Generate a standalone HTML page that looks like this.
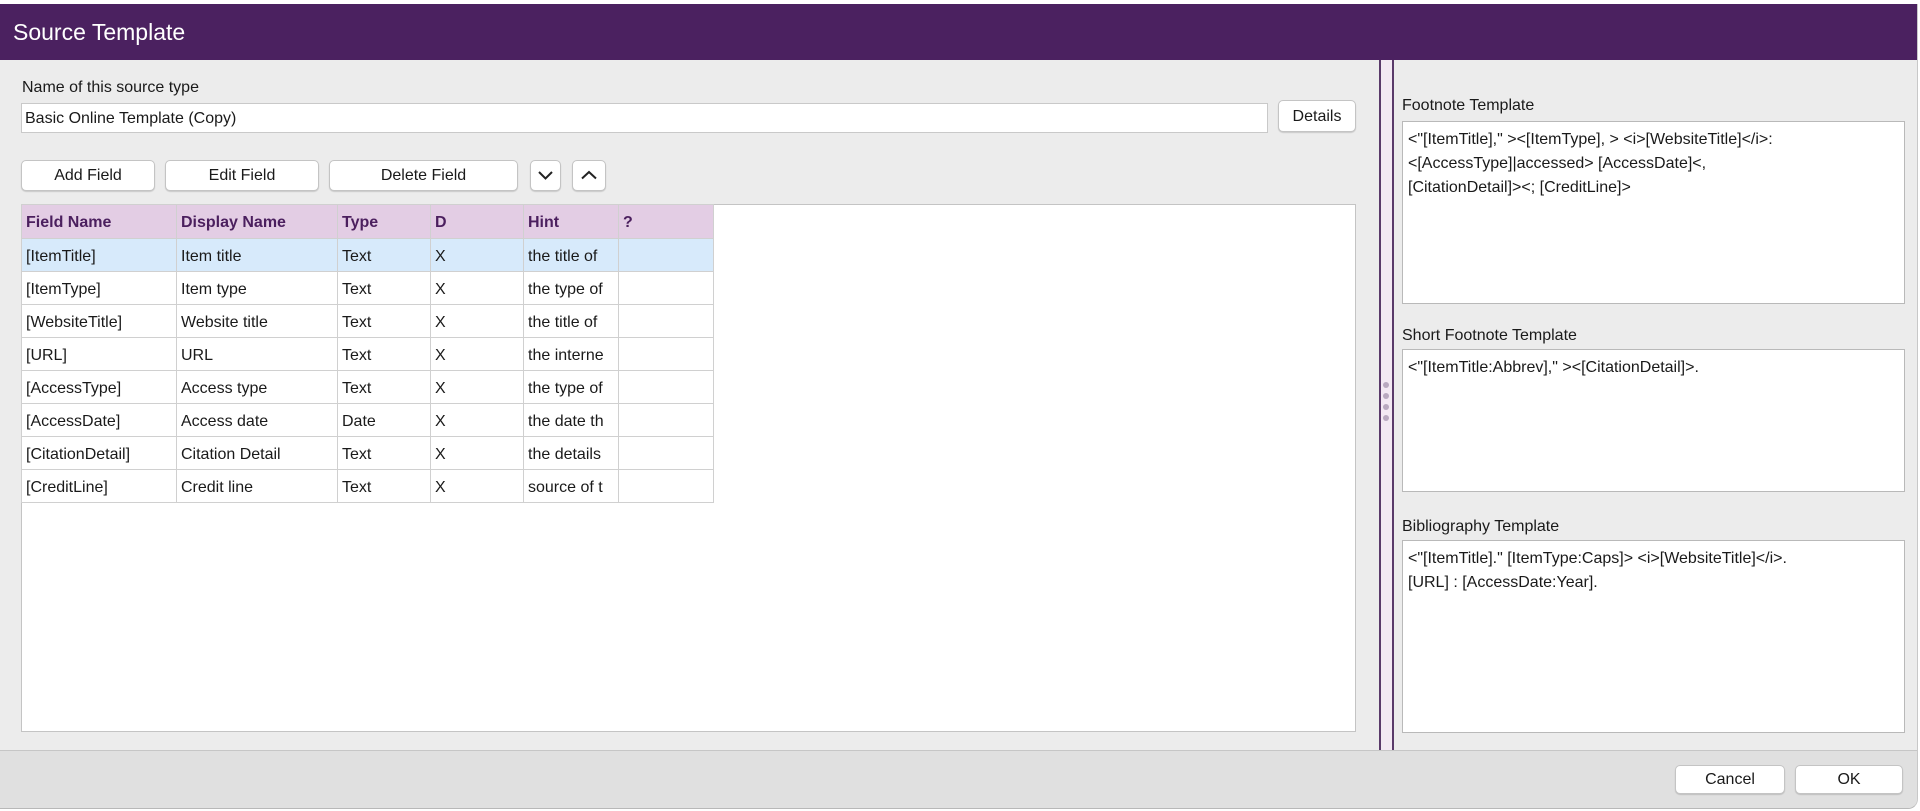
<!DOCTYPE html>
<html><head><meta charset="utf-8"><style>
*{box-sizing:border-box;margin:0;padding:0}
body{width:1920px;height:811px;overflow:hidden;background:#fff;font-family:"Liberation Sans",sans-serif;color:#1a1a1a;position:relative}
.win{position:absolute;left:0;top:4px;width:1918px;height:805px;background:#ececec;border-radius:0 0 10px 0;border-right:1px solid #c8c8c8;border-bottom:1px solid #b8b8b8;overflow:hidden}
.title{position:absolute;left:0;top:0;width:100%;height:56px;background:#4b2160;color:#fff;font-size:23px;line-height:56px;padding-left:13px}
.abs{position:absolute}
.lbl{font-size:16px}
.inp{background:#fff;border:1px solid #c9c9c9;font-size:16px;padding-left:3px}
.btn{position:absolute;background:#fff;border:1px solid #c4c4c4;border-radius:5px;box-shadow:0 1px 1px rgba(0,0,0,.15);font-size:16px;text-align:center}
table{border-collapse:collapse;font-size:16px;position:absolute;left:21px}
td,th{border:1px solid #d0d0d0;height:33px;padding-left:4px;padding-top:3px;text-align:left;white-space:nowrap;overflow:hidden}
th{background:#e3cde4;color:#4b1f5e;font-weight:bold;height:34px}
tr.sel td{background:#d7eafb}
.box{position:absolute;background:#fff;border:1px solid #b9b9b9;font-size:16px;line-height:24px;padding:6px 5px}
</style></head><body>
<div class="win">
<div class="title">Source Template</div>
<div class="abs lbl" style="left:22px;top:75px">Name of this source type</div>
<div class="abs inp" style="left:21px;top:99px;width:1247px;height:30px;line-height:29px">Basic Online Template (Copy)</div>
<div class="btn" style="left:1278px;top:96px;width:78px;height:32px;line-height:31px">Details</div>
<div class="btn" style="left:21px;top:156px;width:134px;height:31px;line-height:30px">Add Field</div>
<div class="btn" style="left:165px;top:156px;width:154px;height:31px;line-height:30px">Edit Field</div>
<div class="btn" style="left:329px;top:156px;width:189px;height:31px;line-height:30px">Delete Field</div>
<div class="btn" style="left:530px;top:156px;width:31px;height:31px"><svg width="29" height="29" viewBox="0 0 29 29"><path d="M8 11l6.5 6.5L21 11" stroke="#222" stroke-width="2" fill="none"/></svg></div>
<div class="btn" style="left:572px;top:156px;width:34px;height:31px"><svg width="32" height="29" viewBox="0 0 32 29"><path d="M9 17.5l7-6.5 7 6.5" stroke="#222" stroke-width="2" fill="none"/></svg></div>
<div class="abs" style="left:21px;top:200px;width:1335px;height:528px;background:#fff;border:1px solid #c4c4c4"></div>
<table style="top:200px">
<colgroup><col style="width:155px"><col style="width:161px"><col style="width:93px"><col style="width:93px"><col style="width:95px"><col style="width:95px"></colgroup>
<tr><th>Field Name</th><th>Display Name</th><th>Type</th><th>D</th><th>Hint</th><th>?</th></tr>
<tr class="sel"><td>[ItemTitle]</td><td>Item title</td><td>Text</td><td>X</td><td>the title of</td><td></td></tr>
<tr><td>[ItemType]</td><td>Item type</td><td>Text</td><td>X</td><td>the type of</td><td></td></tr>
<tr><td>[WebsiteTitle]</td><td>Website title</td><td>Text</td><td>X</td><td>the title of</td><td></td></tr>
<tr><td>[URL]</td><td>URL</td><td>Text</td><td>X</td><td>the interne</td><td></td></tr>
<tr><td>[AccessType]</td><td>Access type</td><td>Text</td><td>X</td><td>the type of</td><td></td></tr>
<tr><td>[AccessDate]</td><td>Access date</td><td>Date</td><td>X</td><td>the date th</td><td></td></tr>
<tr><td>[CitationDetail]</td><td>Citation Detail</td><td>Text</td><td>X</td><td>the details</td><td></td></tr>
<tr><td>[CreditLine]</td><td>Credit line</td><td>Text</td><td>X</td><td>source of t</td><td></td></tr>
</table>
<div class="abs" style="left:1379px;top:56px;width:15px;height:690px;background:#f3e9f3;border-left:2px solid #5a3a6a;border-right:2px solid #5a3a6a"></div>
<div class="abs" style="left:1383px;top:378px;width:6px;height:6px;border-radius:3px;background:#b9a9c0;box-shadow:0 11px 0 #b9a9c0,0 22px 0 #b9a9c0,0 33px 0 #b9a9c0"></div>
<div class="abs lbl" style="left:1402px;top:93px">Footnote Template</div>
<div class="box" style="left:1402px;top:117px;width:503px;height:183px">&lt;"[ItemTitle]," &gt;&lt;[ItemType], &gt; &lt;i&gt;[WebsiteTitle]&lt;/i&gt;:<br>&lt;[AccessType]|accessed&gt; [AccessDate]&lt;,<br>[CitationDetail]&gt;&lt;; [CreditLine]&gt;</div>
<div class="abs lbl" style="left:1402px;top:323px">Short Footnote Template</div>
<div class="box" style="left:1402px;top:345px;width:503px;height:143px">&lt;"[ItemTitle:Abbrev]," &gt;&lt;[CitationDetail]&gt;.</div>
<div class="abs lbl" style="left:1402px;top:514px">Bibliography Template</div>
<div class="box" style="left:1402px;top:536px;width:503px;height:193px">&lt;"[ItemTitle]." [ItemType:Caps]&gt; &lt;i&gt;[WebsiteTitle]&lt;/i&gt;.<br>[URL] : [AccessDate:Year].</div>
<div class="abs" style="left:0;top:746px;width:100%;height:60px;background:#e0e0e0;border-top:1px solid #c6c6c6"></div>
<div class="btn" style="left:1675px;top:761px;width:110px;height:29px;line-height:28px">Cancel</div>
<div class="btn" style="left:1795px;top:761px;width:108px;height:29px;line-height:28px">OK</div>
</div>
</body></html>
